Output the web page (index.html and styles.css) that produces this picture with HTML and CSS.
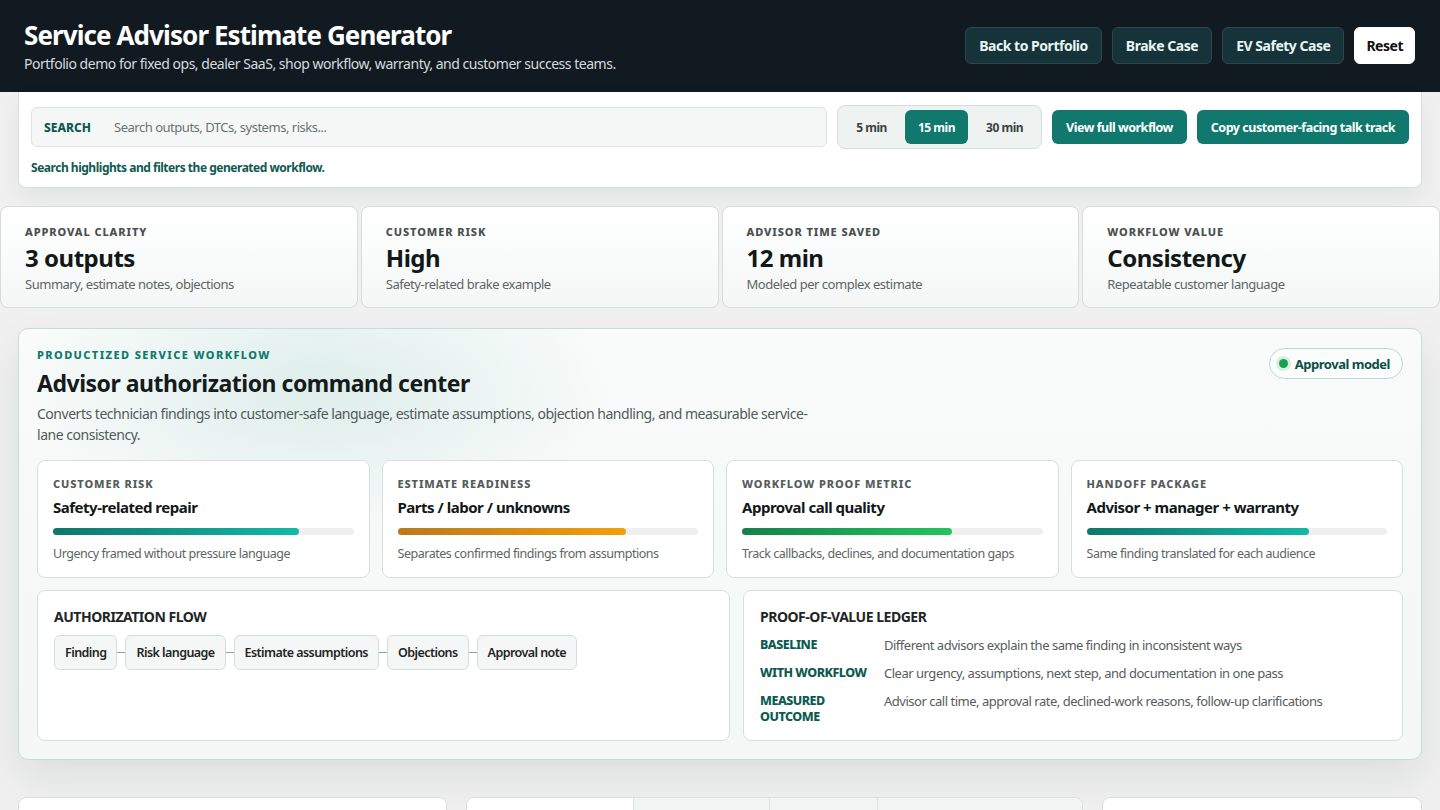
FILE: index.html
```html
<!DOCTYPE html>
<html lang="en">

<head>
  <meta charset="UTF-8">
  <title>Service Advisor Estimate Generator</title>
  <link rel="stylesheet" href="styles.css">
</head>

<body>
  <header class="topbar">
    <div class="brand">
      <h1>Service Advisor Estimate Generator</h1>
      <p>Portfolio demo for fixed ops, dealer SaaS, shop workflow, warranty, and customer success teams.</p>
    </div>
    <nav class="top-actions">
      <button class="btn-dark">Back to Portfolio</button>
      <button class="btn-dark">Brake Case</button>
      <button class="btn-dark">EV Safety Case</button>
      <button class="btn-light">Reset</button>
    </nav>
  </header>

  <main class="page">
    <section class="toolbar">
      <div class="toolbar-row">
        <label class="search">
          <span class="search-label">SEARCH</span>
          <input type="text" placeholder="Search outputs, DTCs, systems, risks...">
        </label>
        <div class="segmented">
          <button>5 min</button>
          <button class="active">15 min</button>
          <button>30 min</button>
        </div>
        <button class="btn-teal">View full workflow</button>
        <button class="btn-teal">Copy customer-facing talk track</button>
      </div>
      <p class="helper">Search highlights and filters the generated workflow.</p>
    </section>

    <section class="metrics">
      <div class="metric">
        <div class="metric-label">Approval clarity</div>
        <div class="metric-value">3 outputs</div>
        <div class="metric-note">Summary, estimate notes, objections</div>
      </div>
      <div class="metric">
        <div class="metric-label">Customer risk</div>
        <div class="metric-value">High</div>
        <div class="metric-note">Safety-related brake example</div>
      </div>
      <div class="metric">
        <div class="metric-label">Advisor time saved</div>
        <div class="metric-value">12 min</div>
        <div class="metric-note">Modeled per complex estimate</div>
      </div>
      <div class="metric">
        <div class="metric-label">Workflow value</div>
        <div class="metric-value">Consistency</div>
        <div class="metric-note">Repeatable customer language</div>
      </div>
    </section>

    <section class="command">
      <div class="command-head">
        <div>
          <div class="eyebrow">Productized service workflow</div>
          <h2>Advisor authorization command center</h2>
          <p class="lead">Converts technician findings into customer-safe language, estimate assumptions, objection handling, and measurable service-lane consistency.</p>
        </div>
        <span class="pill"><span class="dot"></span>Approval model</span>
      </div>

      <div class="signals">
        <div class="signal">
          <div class="signal-label">Customer risk</div>
          <div class="signal-title">Safety-related repair</div>
          <div class="track"><div class="fill fill-teal" style="width: 82%"></div></div>
          <div class="signal-note">Urgency framed without pressure language</div>
        </div>
        <div class="signal">
          <div class="signal-label">Estimate readiness</div>
          <div class="signal-title">Parts / labor / unknowns</div>
          <div class="track"><div class="fill fill-amber" style="width: 76%"></div></div>
          <div class="signal-note">Separates confirmed findings from assumptions</div>
        </div>
        <div class="signal">
          <div class="signal-label">Workflow proof metric</div>
          <div class="signal-title">Approval call quality</div>
          <div class="track"><div class="fill fill-green" style="width: 70%"></div></div>
          <div class="signal-note">Track callbacks, declines, and documentation gaps</div>
        </div>
        <div class="signal">
          <div class="signal-label">Handoff package</div>
          <div class="signal-title">Advisor + manager + warranty</div>
          <div class="track"><div class="fill fill-teal" style="width: 74%"></div></div>
          <div class="signal-note">Same finding translated for each audience</div>
        </div>
      </div>

      <div class="command-lower">
        <div class="panel">
          <h3>Authorization flow</h3>
          <div class="flow">
            <span class="step">Finding</span>
            <span class="link"></span>
            <span class="step">Risk language</span>
            <span class="link"></span>
            <span class="step">Estimate assumptions</span>
            <span class="link"></span>
            <span class="step">Objections</span>
            <span class="link"></span>
            <span class="step">Approval note</span>
          </div>
        </div>
        <div class="panel">
          <h3>Proof-of-value ledger</h3>
          <dl class="ledger">
            <dt>Baseline</dt>
            <dd>Different advisors explain the same finding in inconsistent ways</dd>
            <dt>With workflow</dt>
            <dd>Clear urgency, assumptions, next step, and documentation in one pass</dd>
            <dt>Measured outcome</dt>
            <dd>Advisor call time, approval rate, declined-work reasons, follow-up clarifications</dd>
          </dl>
        </div>
      </div>
    </section>

    <section class="lower-grid">
      <div class="card">
        <h3>Technician findings</h3>
        <p>Front pads at 2 mm, rotors scored, brake fluid moisture above spec.</p>
      </div>
      <div class="card tabs-card">
        <div class="tabs">
          <button class="active">Customer summary</button>
          <button>Estimate notes</button>
          <button>Objections</button>
          <button>Manager / warranty</button>
        </div>
        <p>Generated output appears here.</p>
      </div>
      <div class="card">
        <h3>Talk track</h3>
        <p>Lead with safety, then cost.</p>
      </div>
    </section>
  </main>
</body>

</html>
```

FILE: styles.css
```css
* {
  box-sizing: border-box;
}

body {
  margin: 0;
  font-family: "Noto Sans", "Open Sans", sans-serif;
  letter-spacing: -0.03em;
  background: #eff0ef;
  color: #151b1b;
}

button {
  font-family: inherit;
  letter-spacing: inherit;
  cursor: pointer;
}

/* header */
.topbar {
  display: flex;
  justify-content: space-between;
  align-items: center;
  height: 92px;
  padding: 0 25px 0 24px;
  background: #121a21;
  color: #fff;
}

.brand h1 {
  margin: 0;
  font-size: 26px;
  line-height: 32px;
  font-weight: 700;
  letter-spacing: -0.035em;
}

.brand p {
  margin: 3px 0 0;
  font-size: 14px;
  color: #d4dbdf;
}

.top-actions {
  display: flex;
  gap: 10px;
  margin-top: -2px;
}

.btn-dark,
.btn-light {
  height: 37px;
  padding: 0 13px;
  border-radius: 6px;
  font-size: 14px;
  font-weight: 700;
}

.btn-dark {
  background: #17333a;
  border: 1px solid #2b484d;
  color: #e6f6f4;
}

.btn-light {
  padding: 0 11px;
  background: #fff;
  border: 1px solid #fff;
  color: #111;
}

/* search toolbar */
.page {
  padding-bottom: 40px;
}

.toolbar {
  margin: 0 18px;
  padding: 13px 12px 11px 12px;
  background: #fff;
  border: 1px solid #d7dedc;
  border-top: 0;
  border-radius: 0 0 8px 8px;
  box-shadow: 0 10px 24px rgba(20, 40, 36, 0.06);
}

.toolbar-row {
  display: flex;
  align-items: center;
  gap: 10px;
}

.search {
  flex: 1;
  display: flex;
  align-items: center;
  height: 40px;
  padding: 0 12px;
  background: #f5f7f6;
  border: 1px solid #dde3e1;
  border-radius: 6px;
}

.search-label {
  width: 68px;
  font-size: 12px;
  font-weight: 800;
  letter-spacing: 0;
  color: #0f5a50;
}

.search input {
  flex: 1;
  border: 0;
  background: transparent;
  font-family: inherit;
  letter-spacing: inherit;
  font-size: 13px;
  outline: none;
}

.search input::placeholder {
  color: #6a7372;
}

.segmented {
  display: flex;
  gap: 5px;
  padding: 4px 5px;
  background: #eef2f1;
  border: 1px solid #d6dddb;
  border-radius: 8px;
}

.segmented button {
  height: 34px;
  padding: 0 13px;
  border: 0;
  border-radius: 6px;
  background: transparent;
  font-size: 12px;
  font-weight: 700;
  color: #3b4343;
}

.segmented button.active {
  background: #10786d;
  color: #fff;
}

.btn-teal {
  height: 34px;
  padding: 0 14px;
  border: 0;
  border-radius: 6px;
  background: #11786d;
  color: #fff;
  font-size: 12.5px;
  font-weight: 700;
}

.helper {
  margin: 10px 0 0;
  font-size: 12px;
  font-weight: 700;
  color: #0f5a50;
}

/* metrics */
.metrics {
  display: grid;
  grid-template-columns: repeat(4, 1fr);
  gap: 3px;
  margin-top: 18px;
}

.metric {
  height: 102px;
  padding: 17px 24px 0;
  background: linear-gradient(180deg, #fff, #f4f7f6);
  border: 1px solid #d5dcda;
  border-radius: 8px;
}

.metric-label {
  font-size: 11px;
  font-weight: 800;
  letter-spacing: 0.9px;
  text-transform: uppercase;
  color: #4a5050;
}

.metric-value {
  margin-top: 4px;
  font-size: 24px;
  line-height: 30px;
  font-weight: 700;
  color: #111818;
}

.metric-note {
  margin-top: 2px;
  font-size: 13px;
  color: #5d6565;
}

/* command center */
.command {
  margin: 20px 18px 0;
  padding: 18px 18px 18px;
  border: 1px solid #c8dcd7;
  border-radius: 10px;
  background:
    radial-gradient(ellipse 420px 200px at 300px 60px, rgba(173, 214, 207, 0.35), transparent 70%),
    linear-gradient(180deg, #f8fbfa, #f4f7f6);
  box-shadow: 0 18px 40px rgba(20, 40, 36, 0.08);
}

.command-head {
  display: flex;
  justify-content: space-between;
  align-items: flex-start;
}

.eyebrow {
  font-size: 11px;
  font-weight: 800;
  letter-spacing: 1.4px;
  text-transform: uppercase;
  color: #0f7a6c;
}

.command h2 {
  margin: 6px 0 0;
  font-size: 23px;
  line-height: 30px;
  font-weight: 700;
}

.lead {
  max-width: 790px;
  margin: 5px 0 0;
  font-size: 14px;
  line-height: 21px;
  color: #505a59;
}

.pill {
  display: flex;
  align-items: center;
  gap: 7px;
  margin-top: 1px;
  height: 31px;
  padding: 0 12px 0 9px;
  border: 1px solid #bcd8d1;
  border-radius: 16px;
  background: #fbfdfc;
  font-size: 13px;
  font-weight: 700;
  color: #0d4f47;
}

.dot {
  width: 9px;
  height: 9px;
  border-radius: 50%;
  background: #17a04d;
  box-shadow: 0 0 0 3px #d7efe1;
}

.signals {
  display: grid;
  grid-template-columns: repeat(4, 1fr);
  gap: 12px;
  margin-top: 15px;
}

.signal {
  height: 118px;
  padding: 15px 15px 0;
  background: #fff;
  border: 1px solid #d8e0de;
  border-radius: 8px;
}

.signal-label {
  font-size: 11px;
  font-weight: 800;
  letter-spacing: 0.9px;
  text-transform: uppercase;
  color: #555c5c;
}

.signal-title {
  margin-top: 6px;
  font-size: 15px;
  font-weight: 700;
  color: #121818;
}

.track {
  height: 7px;
  margin-top: 11px;
  border-radius: 4px;
  background: #edf0ef;
}

.fill {
  height: 100%;
  border-radius: 4px;
}

.fill-teal {
  background: linear-gradient(90deg, #0f766b, #14b8a6);
}

.fill-amber {
  background: linear-gradient(90deg, #b87a1d, #f59e0b);
}

.fill-green {
  background: linear-gradient(90deg, #17804a, #22c55e);
}

.signal-note {
  margin-top: 10px;
  font-size: 12.5px;
  color: #5d6565;
}

.command-lower {
  display: grid;
  grid-template-columns: 1.05fr 1fr;
  gap: 13px;
  margin-top: 12px;
}

.panel {
  min-height: 151px;
  padding: 16px 16px 12px;
  background: #fff;
  border: 1px solid #d8e0de;
  border-radius: 8px;
}

.panel h3 {
  margin: 0;
  font-size: 14px;
  font-weight: 700;
  text-transform: uppercase;
  color: #1d2525;
}

.flow {
  display: flex;
  align-items: center;
  margin-top: 9px;
}

.step {
  padding: 8px 10px;
  background: #f5f7f6;
  border: 1px solid #d3dcda;
  border-radius: 6px;
  font-size: 12.5px;
  font-weight: 600;
  letter-spacing: -0.045em;
  color: #1d2525;
}

.link {
  width: 8px;
  height: 1px;
  background: #8fa5a1;
}

.ledger {
  display: grid;
  grid-template-columns: 124px 1fr;
  row-gap: 12px;
  margin: 11px 0 0;
}

.ledger dt {
  font-size: 12.5px;
  font-weight: 800;
  text-transform: uppercase;
  color: #0d5a50;
  line-height: 16px;
}

.ledger dd {
  margin: 0;
  font-size: 13px;
  color: #555d5d;
  line-height: 16px;
}

/* lower cards */
.lower-grid {
  display: grid;
  grid-template-columns: 429fr 617fr 320fr;
  gap: 19px;
  margin: 37px 18px 0;
}

.card {
  min-height: 200px;
  padding: 18px;
  background: #fff;
  border: 1px solid #d8e0de;
  border-radius: 8px;
}

.card h3 {
  margin: 0;
  font-size: 14px;
}

.tabs-card {
  padding: 0;
  overflow: hidden;
}

.tabs {
  display: grid;
  grid-template-columns: 167fr 136fr 108fr 206fr;
}

.tabs button {
  height: 40px;
  border: 0;
  border-left: 1px solid #dfe5e3;
  background: #f2f4f3;
  font-size: 13px;
  font-weight: 700;
}

.tabs button.active {
  border-left: 0;
  background: #fff;
}

.tabs-card p {
  padding: 0 18px;
  font-size: 13px;
}

.card p {
  font-size: 13px;
}
```
